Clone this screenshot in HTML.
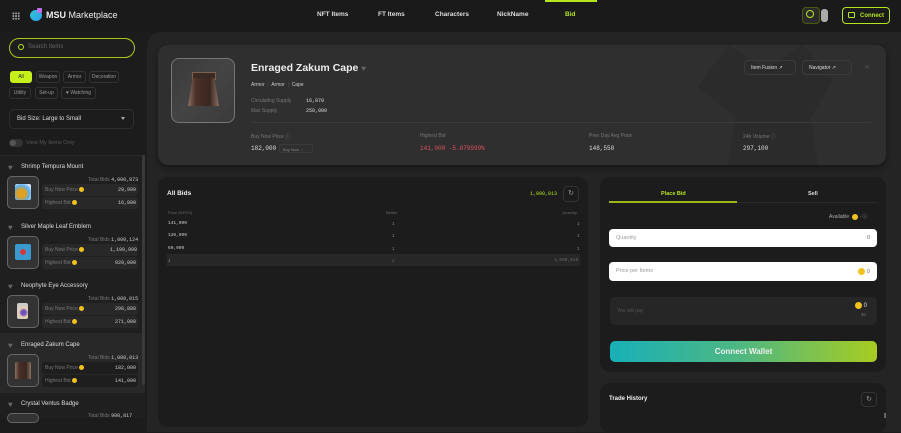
<!DOCTYPE html>
<html><head><meta charset="utf-8"><style>
*{box-sizing:border-box;margin:0;padding:0}
body{width:901px;height:418px;overflow:hidden;background:#1c1c1c;font-family:"Liberation Sans",sans-serif;color:#eee;position:relative}
.a{position:absolute}
.mono{font-family:"Liberation Mono",monospace}
.chip{position:absolute;height:12px;border:1px solid #333;border-radius:3px;font-size:5px;color:#999;line-height:10px;text-align:center}
.lbl{font-size:5px;color:#777}
.item .name{font-size:6px;color:#ddd}
.coin{display:inline-block;width:5px;height:5px;border-radius:50%;background:#f1c21b;vertical-align:middle}
.heart{width:8px;height:7px;color:#666;font-size:8px;line-height:7px}
</style></head><body>
<!-- header -->
<div class="a" style="left:0;top:0;width:901px;height:32px;background:#1a1a1a"></div>
<div class="a" style="left:12px;top:12px;width:8px;height:8px;background:radial-gradient(circle,#aaa 0.8px,transparent 1.1px) 0 0/2.7px 2.7px"></div>
<div class="a" style="left:30px;top:10px;width:12px;height:11px;border-radius:50%;background:linear-gradient(135deg,#2ec7d8,#2fa0e8)"></div>
<div class="a" style="left:37px;top:8px;width:5px;height:5px;background:#c46cf0;border-radius:1px"></div>
<div class="a" style="left:46px;top:10px;font-size:9px;font-weight:bold;color:#eee">MSU <span style="font-weight:normal">Marketplace</span></div>
<div class="a" style="left:317px;top:11px;font-size:6.5px;font-weight:bold;color:#ddd">NFT Items</div>
<div class="a" style="left:378px;top:11px;font-size:6.5px;font-weight:bold;color:#ddd">FT Items</div>
<div class="a" style="left:435px;top:11px;font-size:6.5px;font-weight:bold;color:#ddd">Characters</div>
<div class="a" style="left:497px;top:11px;font-size:6.5px;font-weight:bold;color:#ddd">NickName</div>
<div class="a" style="left:545px;top:0;width:52px;height:2px;background:#b5e61d"></div>
<div class="a" style="left:565px;top:11px;font-size:6.5px;font-weight:bold;color:#b5e61d">Bid</div>
<div class="a" style="left:802px;top:7px;width:18px;height:17px;border:1px solid #4a5a10;border-radius:4px;background:#2a2a2a"></div>
<div class="a" style="left:806px;top:10px;width:8px;height:8px;border:1.3px solid #b5e61d;border-radius:50%"></div>
<div class="a" style="left:821px;top:9px;width:7px;height:13px;background:#aaa;border-radius:3px"></div>
<div class="a" style="left:842px;top:7px;width:48px;height:17px;border:1px solid #b5e61d;border-radius:4px;font-size:6px;color:#b5e61d;font-weight:bold;padding:5px 0 0 17px">Connect</div>
<div class="a" style="left:848px;top:12px;width:7px;height:6px;border:1.2px solid #b5e61d;border-radius:1px"></div>
<!-- sidebar -->
<div class="a" style="left:9px;top:38px;width:126px;height:20px;border:1px solid #a8c81c;border-radius:10px;background:#1e1e1e"></div>
<div class="a" style="left:18px;top:44px;width:6px;height:6px;border:1.2px solid #b5e61d;border-radius:50%"></div>
<div class="a" style="left:28px;top:44px;font-size:6px;color:#666">Search Items</div>
<div class="chip" style="left:10px;top:71px;width:22px;background:#c6f01b;color:#222;border-color:#c6f01b">All</div>
<div class="chip" style="left:36px;top:71px;width:24px">Weapon</div>
<div class="chip" style="left:63px;top:71px;width:23px">Armor</div>
<div class="chip" style="left:89px;top:71px;width:30px">Decoration</div>
<div class="chip" style="left:9px;top:87px;width:22px">Utility</div>
<div class="chip" style="left:35px;top:87px;width:23px">Set-up</div>
<div class="chip" style="left:61px;top:87px;width:35px">♥ Watching</div>
<div class="a" style="left:9px;top:109px;width:125px;height:20px;border:1px solid #2e2e2e;border-radius:5px;font-size:6px;color:#ddd;padding:6px 7px">Bid Size: Large to Small</div>
<div class="a" style="left:121px;top:117px;border:2.5px solid transparent;border-top:3px solid #aaa"></div>
<div class="a" style="left:9px;top:139px;width:14px;height:8px;border-radius:4px;background:#333"></div>
<div class="a" style="left:10px;top:140px;width:6px;height:6px;border-radius:50%;background:#555"></div>
<div class="a" style="left:26px;top:140px;font-size:5.5px;color:#555">View My Items Only</div>
<div class="a" style="left:0;top:155px;width:145px;height:263px;background:#1f1f1f;border-top:1px solid #2a2a2a"></div>
<div class="a" style="left:0;top:333px;width:145px;height:60px;background:#282828"></div>
<div class="a" style="left:142px;top:155px;width:3px;height:230px;background:#3a3a3a;border-radius:2px"></div>

<div class="item">
<div class="a heart" style="left:8px;top:164px">♥</div><div class="a name" style="left:21px;top:164px">Shrimp Tempura Mount</div>
<div class="a" style="left:7px;top:176px;width:32px;height:33px;border:1px solid #666;border-radius:5px;background:#333"></div>
<div class="a" style="left:15px;top:184px;width:16px;height:16px;background:radial-gradient(circle at 40% 60%,#e0a020 30%,#5ab0f0 60%,#eef 90%);border-radius:2px"></div>
<div class="a lbl" style="left:88px;top:177px">Total Bids <span class="mono" style="color:#ccc">4,000,873</span></div>
<div class="a" style="left:42px;top:184px;width:96px;height:12px;background:#282828;border-radius:3px"></div>
<div class="a" style="left:42px;top:197px;width:96px;height:12px;background:#282828;border-radius:3px"></div>
<div class="a lbl" style="left:45px;top:187px">Buy Now Price <span class="coin"></span></div>
<div class="a lbl mono" style="left:118px;top:187px;color:#ccc">29,999</div>
<div class="a lbl" style="left:45px;top:200px">Highest Bid <span class="coin"></span></div>
<div class="a lbl mono" style="left:118px;top:200px;color:#ccc">16,000</div>
</div>
<div class="item">
<div class="a heart" style="left:8px;top:224px">♥</div><div class="a name" style="left:21px;top:224px">Silver Maple Leaf Emblem</div>
<div class="a" style="left:7px;top:236px;width:32px;height:33px;border:1px solid #666;border-radius:5px;background:#333"></div>
<div class="a" style="left:15px;top:244px;width:16px;height:16px;background:radial-gradient(circle,#e03030 20%,#3a9ad0 30%);border-radius:2px"></div>
<div class="a lbl" style="left:88px;top:237px">Total Bids <span class="mono" style="color:#ccc">1,000,124</span></div>
<div class="a" style="left:42px;top:244px;width:96px;height:12px;background:#282828;border-radius:3px"></div>
<div class="a" style="left:42px;top:257px;width:96px;height:12px;background:#282828;border-radius:3px"></div>
<div class="a lbl" style="left:45px;top:247px">Buy Now Price <span class="coin"></span></div>
<div class="a lbl mono" style="left:110px;top:247px;color:#ccc">1,199,999</div>
<div class="a lbl" style="left:45px;top:260px">Highest Bid <span class="coin"></span></div>
<div class="a lbl mono" style="left:115px;top:260px;color:#ccc">920,000</div>
</div>
<div class="item">
<div class="a heart" style="left:8px;top:283px">♥</div><div class="a name" style="left:21px;top:283px">Neophyte Eye Accessory</div>
<div class="a" style="left:7px;top:295px;width:32px;height:33px;border:1px solid #666;border-radius:5px;background:#333"></div>
<div class="a" style="left:17px;top:303px;width:11px;height:16px;background:radial-gradient(circle at 60% 60%,#7050c0 20%,#e8d0b0 40%,#ccc 70%);border-radius:2px"></div>
<div class="a lbl" style="left:88px;top:296px">Total Bids <span class="mono" style="color:#ccc">1,000,015</span></div>
<div class="a" style="left:42px;top:303px;width:96px;height:12px;background:#282828;border-radius:3px"></div>
<div class="a" style="left:42px;top:316px;width:96px;height:12px;background:#282828;border-radius:3px"></div>
<div class="a lbl" style="left:45px;top:306px">Buy Now Price <span class="coin"></span></div>
<div class="a lbl mono" style="left:115px;top:306px;color:#ccc">298,888</div>
<div class="a lbl" style="left:45px;top:319px">Highest Bid <span class="coin"></span></div>
<div class="a lbl mono" style="left:115px;top:319px;color:#ccc">271,000</div>
</div>
<div class="item">
<div class="a heart" style="left:8px;top:342px">♥</div><div class="a name" style="left:21px;top:342px">Enraged Zakum Cape</div>
<div class="a" style="left:7px;top:354px;width:32px;height:33px;border:1px solid #666;border-radius:5px;background:#333"></div>
<div class="a" style="left:15px;top:362px;width:16px;height:17px;background:linear-gradient(90deg,#8a7060,#4a3028 25%,#3a2620 70%,#8a7060);border-radius:2px 2px 0 0"></div>
<div class="a lbl" style="left:88px;top:355px">Total Bids <span class="mono" style="color:#ccc">1,000,013</span></div>
<div class="a" style="left:42px;top:362px;width:96px;height:12px;background:#1e1e1e;border-radius:3px"></div>
<div class="a" style="left:42px;top:375px;width:96px;height:12px;background:#1e1e1e;border-radius:3px"></div>
<div class="a lbl" style="left:45px;top:365px">Buy Now Price <span class="coin"></span></div>
<div class="a lbl mono" style="left:115px;top:365px;color:#ccc">182,000</div>
<div class="a lbl" style="left:45px;top:378px">Highest Bid <span class="coin"></span></div>
<div class="a lbl mono" style="left:115px;top:378px;color:#ccc">141,000</div>
</div>
<div class="a heart" style="left:8px;top:401px">♥</div><div class="a" style="left:21px;top:401px;font-size:6px;color:#ddd">Crystal Ventus Badge</div>
<div class="a" style="left:7px;top:413px;width:32px;height:10px;border:1px solid #666;border-radius:5px;background:#333"></div>
<div class="a lbl" style="left:88px;top:413px">Total Bids <span class="mono" style="color:#ccc">900,817</span></div>

<!-- main -->
<div class="a" style="left:147px;top:32px;width:760px;height:400px;background:#242424;border-radius:14px 0 0 0"></div>
<div class="a" style="left:158px;top:45px;width:728px;height:120px;background:#2f2f2f;border-radius:10px;box-shadow:0 3px 6px rgba(0,0,0,.4);overflow:hidden">
 <div class="a" style="left:540px;top:0;width:150px;height:120px;background:#2b2b2b;clip-path:polygon(20% 0,45% 20%,70% 0,90% 30%,75% 60%,80% 100%,20% 100%,25% 60%,0 35%)"></div>
</div>
<div class="a" style="left:171px;top:58px;width:64px;height:65px;border:1px solid #777;border-radius:8px;background:linear-gradient(135deg,#3a3a3a,#444 50%,#3a3a3a)"></div>
<div class="a" style="left:192px;top:72px;width:24px;height:8px;background:#3a2a22;border:1px solid #7a6050"></div>
<div class="a" style="left:188px;top:78px;width:31px;height:28px;background:linear-gradient(90deg,#8a7060,#4a3028 25%,#3a2620 70%,#8a7060);clip-path:polygon(15% 0,85% 0,100% 100%,0 100%)"></div>
<div class="a" style="left:251px;top:62px;font-size:10.5px;font-weight:bold;color:#eee">Enraged Zakum Cape <span style="color:#666;font-size:8px">♥</span></div>
<div class="a" style="left:251px;top:82px;font-size:5px;color:#ccc">Armor &nbsp;<span style="color:#555">|</span>&nbsp; Armor &nbsp;<span style="color:#555">|</span>&nbsp; Cape</div>
<div class="a lbl" style="left:251px;top:98px">Circulating Supply</div><div class="a lbl mono" style="left:306px;top:98px;color:#ddd">16,870</div>
<div class="a lbl" style="left:251px;top:108px">Max Supply</div><div class="a lbl mono" style="left:306px;top:108px;color:#ddd">250,000</div>
<div class="a" style="left:251px;top:122px;width:620px;height:1px;background:#3a3a3a"></div>
<div class="a lbl" style="left:251px;top:133px;color:#777">Buy Now Price ⓘ</div>
<div class="a mono" style="left:251px;top:145px;font-size:6px;color:#ddd">182,000</div>
<div class="a" style="left:279px;top:144px;width:34px;height:9px;border:1px solid #3a3a3a;border-radius:2px;font-size:4px;color:#888;padding:2px 3px">Buy Now &nbsp;›</div>
<div class="a lbl" style="left:420px;top:133px">Highest Bid</div>
<div class="a mono" style="left:420px;top:145px;font-size:6px;color:#e05060">141,000 -5.879999%</div>
<div class="a lbl" style="left:589px;top:133px">Prev Day Avg Price</div>
<div class="a mono" style="left:589px;top:145px;font-size:6px;color:#ddd">148,550</div>
<div class="a lbl" style="left:743px;top:133px">24h Volume ⓘ</div>
<div class="a mono" style="left:743px;top:145px;font-size:6px;color:#ddd">297,100</div>
<div class="a" style="left:744px;top:60px;width:52px;height:15px;border:1px solid #3a3a3a;border-radius:4px;font-size:5px;color:#ddd;padding:4px 6px">Item Fusion ↗</div>
<div class="a" style="left:802px;top:60px;width:50px;height:15px;border:1px solid #3a3a3a;border-radius:4px;font-size:5px;color:#ddd;padding:4px 6px">Navigator ↗</div>
<div class="a" style="left:864px;top:63px;font-size:7px;color:#555">⋖</div>

<!-- all bids -->
<div class="a" style="left:158px;top:177px;width:430px;height:250px;background:#1c1c1c;border-radius:10px"></div>
<div class="a" style="left:167px;top:190px;font-size:6.5px;font-weight:bold;color:#eee">All Bids</div>
<div class="a mono" style="left:530px;top:191px;font-size:5px;color:#b5e61d">1,000,013</div>
<div class="a" style="left:563px;top:186px;width:16px;height:16px;border:1px solid #333;border-radius:4px;font-size:7px;color:#999;text-align:center;line-height:14px">↻</div>
<div class="a lbl" style="left:168px;top:210px;color:#666;font-size:4px">Price (NESO)</div>
<div class="a lbl" style="left:386px;top:210px;color:#666;font-size:4px">Bidder</div>
<div class="a lbl" style="left:562px;top:210px;color:#666;font-size:4px">Quantity</div>
<div class="a mono" style="left:168px;top:221px;font-size:4.5px;color:#ccc">141,000</div><div class="a" style="left:392px;top:221px;font-size:4.5px;color:#888">1</div><div class="a" style="left:577px;top:221px;font-size:4.5px;color:#888">1</div>
<div class="a mono" style="left:168px;top:233px;font-size:4.5px;color:#ccc">120,000</div><div class="a" style="left:392px;top:233px;font-size:4.5px;color:#888">1</div><div class="a" style="left:577px;top:233px;font-size:4.5px;color:#888">1</div>
<div class="a mono" style="left:168px;top:246px;font-size:4.5px;color:#ccc">60,000</div><div class="a" style="left:392px;top:246px;font-size:4.5px;color:#888">1</div><div class="a" style="left:577px;top:246px;font-size:4.5px;color:#888">1</div>
<div class="a" style="left:167px;top:254px;width:413px;height:12px;background:#272727"></div>
<div class="a" style="left:168px;top:258px;font-size:4.5px;color:#888">1</div><div class="a" style="left:392px;top:258px;font-size:4.5px;color:#666">2</div><div class="a mono" style="left:554px;top:258px;font-size:4.5px;color:#666">1,000,010</div>

<!-- place bid -->
<div class="a" style="left:600px;top:177px;width:286px;height:195px;background:#1c1c1c;border-radius:10px"></div>
<div class="a" style="left:661px;top:191px;font-size:5.5px;font-weight:bold;color:#b5e61d">Place Bid</div>
<div class="a" style="left:808px;top:191px;font-size:5.5px;font-weight:bold;color:#ddd">Sell</div>
<div class="a" style="left:609px;top:201px;width:128px;height:2px;background:#9ab81a"></div>
<div class="a" style="left:737px;top:202px;width:140px;height:1px;background:#2a2a2a"></div>
<div class="a lbl" style="left:829px;top:213px;color:#aaa">Available &nbsp;<span class="coin" style="width:6px;height:6px"></span> · ⓘ</div>
<div class="a" style="left:609px;top:229px;width:268px;height:18px;background:#fff;border-radius:4px;font-size:5.5px;color:#999;padding:6px 7px">Quantity<span style="position:absolute;right:7px;color:#666">0</span></div>
<div class="a" style="left:609px;top:262px;width:268px;height:19px;background:#fff;border-radius:4px;font-size:5.5px;color:#999;padding:6px 7px">Price per Items<span style="position:absolute;right:7px;color:#666"><span class="coin" style="width:7px;height:7px"></span> 0</span></div>
<div class="a" style="left:610px;top:297px;width:267px;height:28px;background:#262626;border-radius:5px;font-size:5px;color:#555;padding:11px 7px">You will pay</div>
<div class="a" style="left:855px;top:302px;font-size:6px;color:#ddd"><span class="coin" style="width:7px;height:7px"></span> 0</div>
<div class="a" style="left:861px;top:312px;font-size:4.5px;color:#666">$0</div>
<div class="a" style="left:610px;top:341px;width:267px;height:21px;background:linear-gradient(90deg,#18b0b8,#50b880 50%,#a8cc20);border-radius:5px;font-size:8px;font-weight:bold;color:#eee;text-align:center;line-height:21px">Connect Wallet</div>

<div class="a" style="left:600px;top:383px;width:286px;height:50px;background:#1c1c1c;border-radius:10px"></div>
<div class="a" style="left:609px;top:396px;font-size:6px;font-weight:bold;color:#eee">Trade History</div>
<div class="a" style="left:861px;top:392px;width:16px;height:15px;border:1px solid #333;border-radius:4px;font-size:7px;color:#999;text-align:center;line-height:13px">↻</div>
<div class="a" style="left:884px;top:413px;width:2px;height:5px;background:#666"></div>
</body></html>
